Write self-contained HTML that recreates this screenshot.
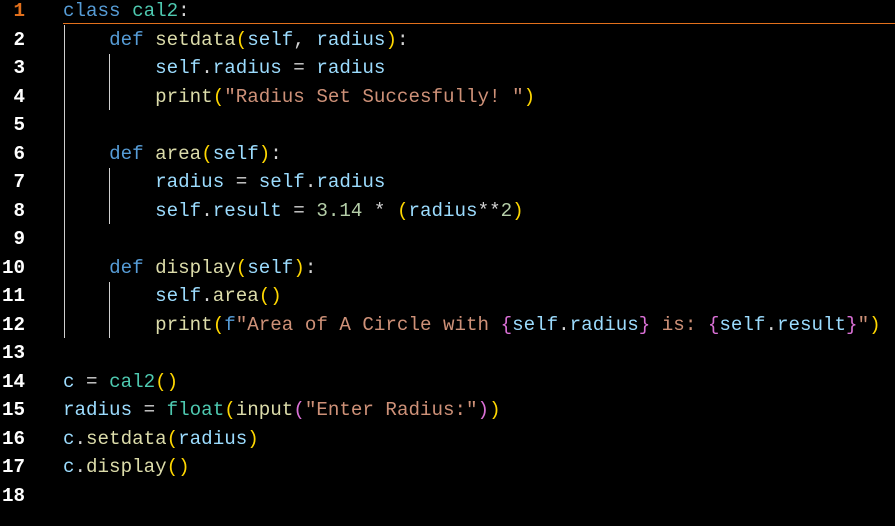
<!DOCTYPE html>
<html><head><meta charset="utf-8"><style>
html,body{margin:0;padding:0;background:#000;width:895px;height:526px;overflow:hidden}
body{position:relative;font-family:"Liberation Mono",monospace;font-size:19.2px}
.ln{position:absolute;left:0;width:25px;text-align:right;color:#fff;font-weight:bold;height:28.5px;line-height:28.5px}
.c{position:absolute;left:63px;white-space:pre;color:#d4d4d4;height:28.5px;line-height:28.5px}
.k{color:#569cd6}.t{color:#4ec9b0}.f{color:#dcdcaa}.v{color:#9cdcfe}.s{color:#ce9178}.n{color:#b5cea8}.p{color:#ffd700}.b{color:#da70d6}
.g{position:absolute;width:1px;background:#d0d0d0}
</style></head><body>
<div style="position:absolute;left:63px;top:23px;right:0;height:1px;background:#e2701c"></div>
<div class="g" style="left:64px;top:25px;height:313px"></div>
<div class="g" style="left:109px;top:54px;height:56px"></div>
<div class="g" style="left:109px;top:168px;height:56px"></div>
<div class="g" style="left:109px;top:282px;height:56px"></div>

<div class="ln" style="top:-3px;color:#e2701c">1</div>
<div class="ln" style="top:25.5px">2</div>
<div class="ln" style="top:54px">3</div>
<div class="ln" style="top:82.5px">4</div>
<div class="ln" style="top:111px">5</div>
<div class="ln" style="top:139.5px">6</div>
<div class="ln" style="top:168px">7</div>
<div class="ln" style="top:196.5px">8</div>
<div class="ln" style="top:225px">9</div>
<div class="ln" style="top:253.5px">10</div>
<div class="ln" style="top:282px">11</div>
<div class="ln" style="top:310.5px">12</div>
<div class="ln" style="top:339px">13</div>
<div class="ln" style="top:367.5px">14</div>
<div class="ln" style="top:396px">15</div>
<div class="ln" style="top:424.5px">16</div>
<div class="ln" style="top:453px">17</div>
<div class="ln" style="top:481.5px">18</div>

<div class="c" style="top:-3px"><span class="k">class</span> <span class="t">cal2</span>:</div>
<div class="c" style="top:25.5px">    <span class="k">def</span> <span class="f">setdata</span><span class="p">(</span><span class="v">self</span>, <span class="v">radius</span><span class="p">)</span>:</div>
<div class="c" style="top:54px">        <span class="v">self</span>.<span class="v">radius</span> = <span class="v">radius</span></div>
<div class="c" style="top:82.5px">        <span class="f">print</span><span class="p">(</span><span class="s">"Radius Set Succesfully! "</span><span class="p">)</span></div>
<div class="c" style="top:139.5px">    <span class="k">def</span> <span class="f">area</span><span class="p">(</span><span class="v">self</span><span class="p">)</span>:</div>
<div class="c" style="top:168px">        <span class="v">radius</span> = <span class="v">self</span>.<span class="v">radius</span></div>
<div class="c" style="top:196.5px">        <span class="v">self</span>.<span class="v">result</span> = <span class="n">3.14</span> * <span class="p">(</span><span class="v">radius</span>**<span class="n">2</span><span class="p">)</span></div>
<div class="c" style="top:253.5px">    <span class="k">def</span> <span class="f">display</span><span class="p">(</span><span class="v">self</span><span class="p">)</span>:</div>
<div class="c" style="top:282px">        <span class="v">self</span>.<span class="f">area</span><span class="p">()</span></div>
<div class="c" style="top:310.5px">        <span class="f">print</span><span class="p">(</span><span class="k">f</span><span class="s">"Area of A Circle with </span><span class="b">{</span><span class="v">self</span>.<span class="v">radius</span><span class="b">}</span><span class="s"> is: </span><span class="b">{</span><span class="v">self</span>.<span class="v">result</span><span class="b">}</span><span class="s">"</span><span class="p">)</span></div>
<div class="c" style="top:367.5px"><span class="v">c</span> = <span class="t">cal2</span><span class="p">()</span></div>
<div class="c" style="top:396px"><span class="v">radius</span> = <span class="t">float</span><span class="p">(</span><span class="f">input</span><span class="b">(</span><span class="s">"Enter Radius:"</span><span class="b">)</span><span class="p">)</span></div>
<div class="c" style="top:424.5px"><span class="v">c</span>.<span class="f">setdata</span><span class="p">(</span><span class="v">radius</span><span class="p">)</span></div>
<div class="c" style="top:453px"><span class="v">c</span>.<span class="f">display</span><span class="p">()</span></div>
</body></html>
